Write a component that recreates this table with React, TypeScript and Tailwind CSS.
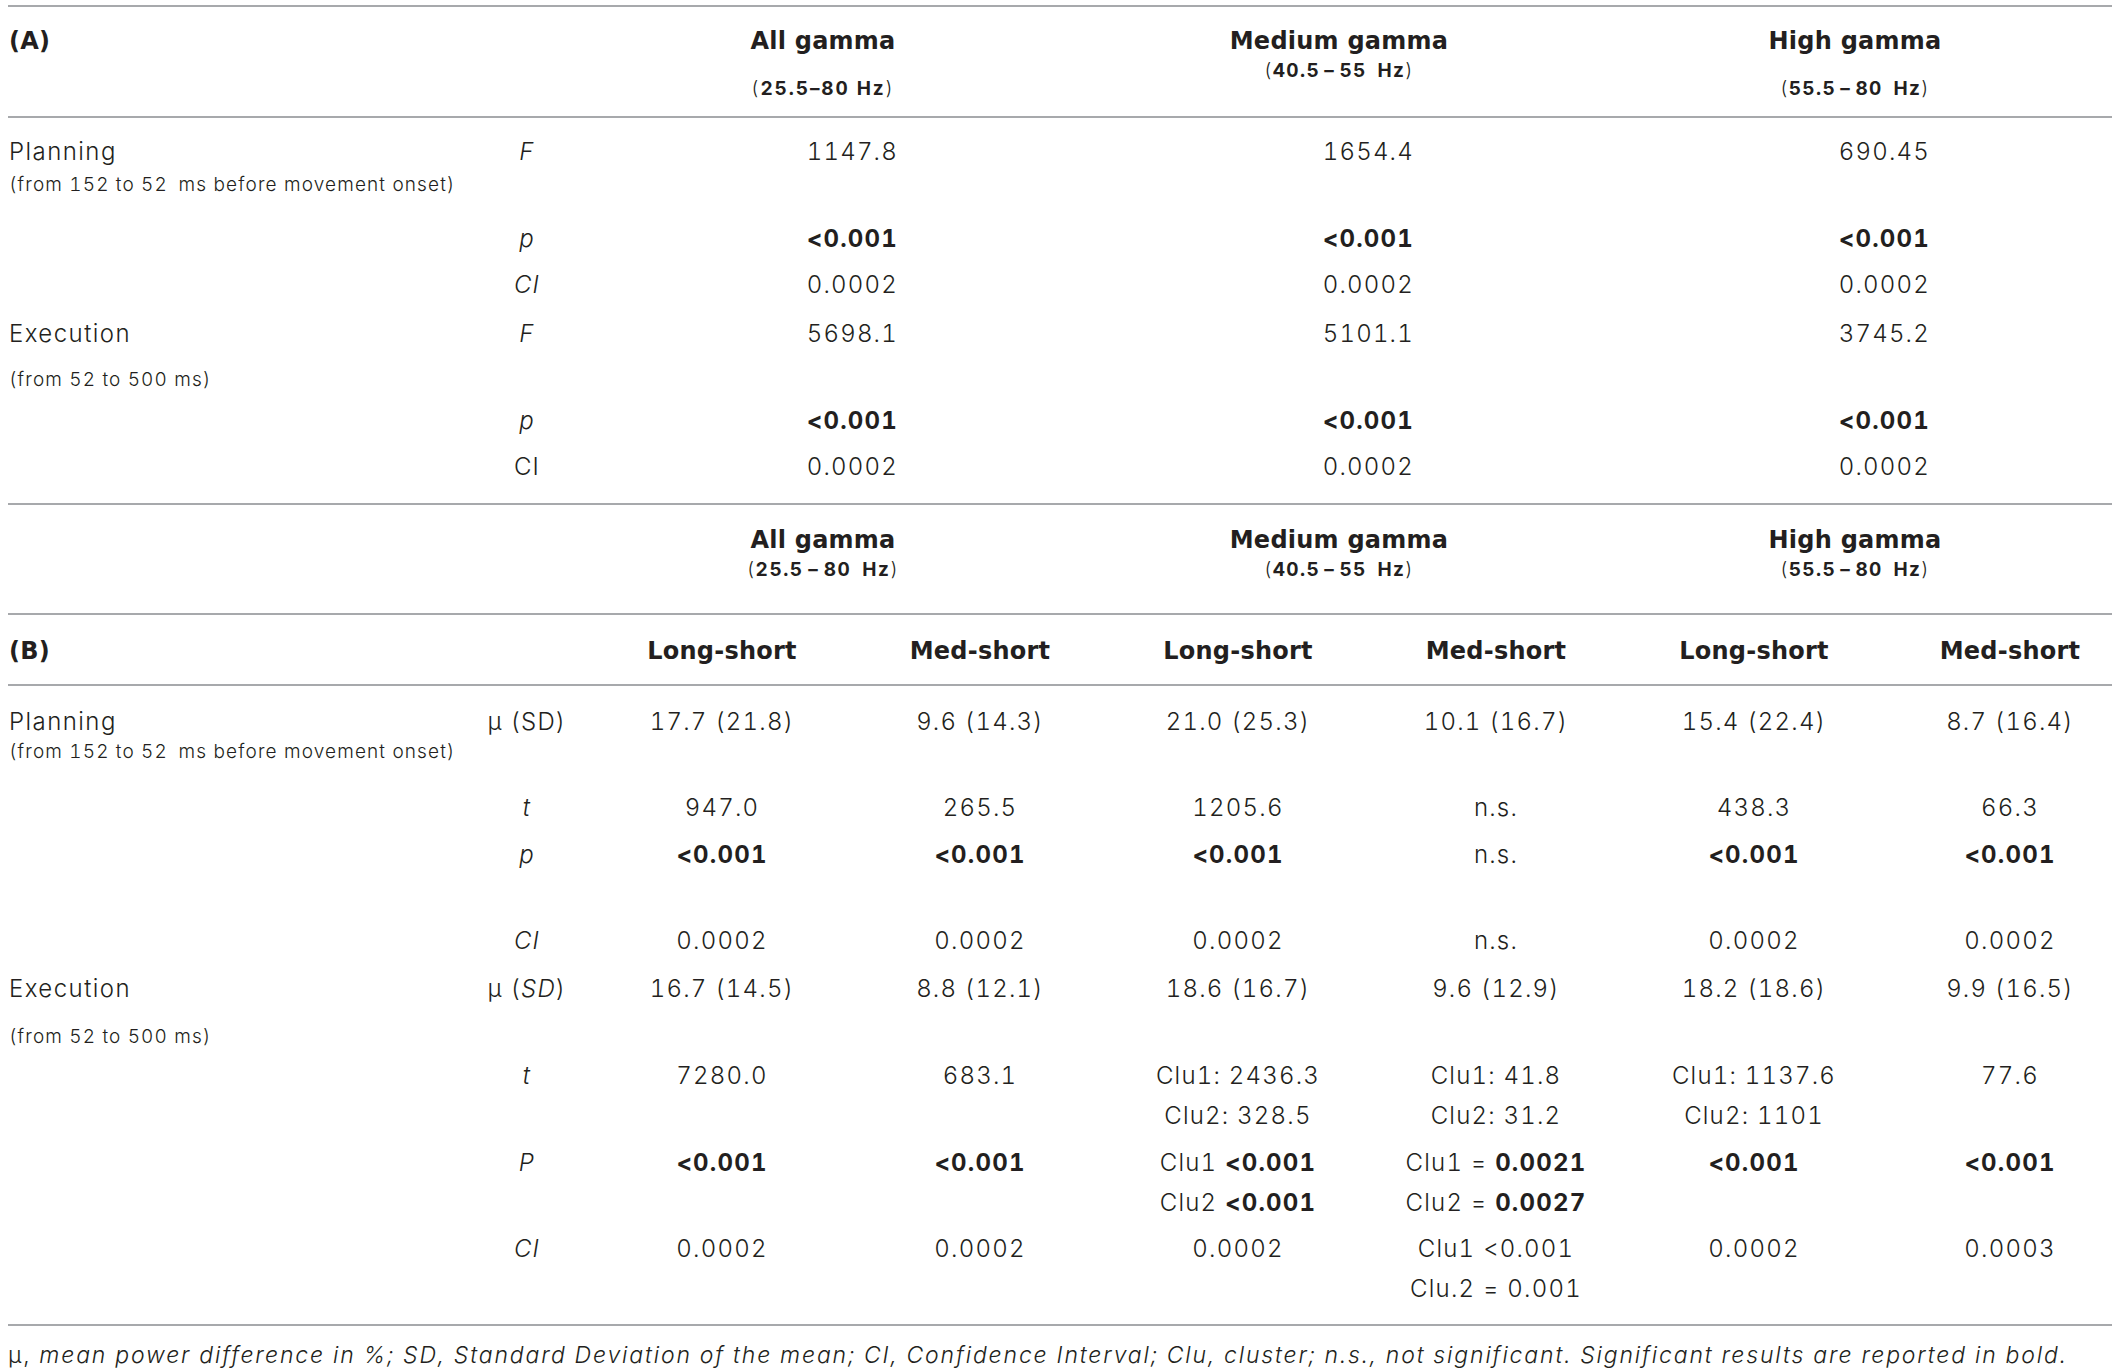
import type { ReactNode } from 'react'

const COLS = 'grid grid-cols-[453px_132px_258px_258px_258px_258px_258px_229px]'
const LINE = 'h-[2px] w-[2104px] bg-[#a7a9ac]'
// wide bold face for the column titles
const HEAD = "font-['DejaVu_Sans','Inter',sans-serif] font-bold tracking-[0.01em]"

const B = ({ children }: { children: ReactNode }) => <span className="font-bold">{children}</span>
const I = ({ children }: { children: ReactNode }) => <i>{children}</i>

type ARow = {
  cls: string
  label?: string
  sub?: string
  subCls?: string
  stat: ReactNode
  vals: ReactNode[]
}

const aRows: ARow[] = [
  {
    cls: 'h-[101px] pt-[14px]',
    label: 'Planning',
    sub: '(from 152 to 52\u2002ms before movement onset)',
    subCls: 'mt-[3px]',
    stat: <I>F</I>,
    vals: ['1147.8', '1654.4', '690.45'],
  },
  { cls: 'h-[46px]', stat: <I>p</I>, vals: [<B>&lt;0.001</B>, <B>&lt;0.001</B>, <B>&lt;0.001</B>] },
  { cls: 'h-[49px]', stat: <I>CI</I>, vals: ['0.0002', '0.0002', '0.0002'] },
  {
    cls: 'h-[87px]',
    label: 'Execution',
    sub: '(from 52 to 500 ms)',
    subCls: 'mt-[16px]',
    stat: <I>F</I>,
    vals: ['5698.1', '5101.1', '3745.2'],
  },
  { cls: 'h-[46px]', stat: <I>p</I>, vals: [<B>&lt;0.001</B>, <B>&lt;0.001</B>, <B>&lt;0.001</B>] },
  { cls: 'h-[56px]', stat: 'CI', vals: ['0.0002', '0.0002', '0.0002'] },
]

type BRow = {
  cls: string
  label?: string
  sub?: string
  subCls?: string
  stat: ReactNode
  vals: (ReactNode | ReactNode[])[]
}

const lt = <B>&lt;0.001</B>

const bRows: BRow[] = [
  {
    cls: 'h-[102px] pt-[16px]',
    label: 'Planning',
    sub: '(from 152 to 52\u2002ms before movement onset)',
    subCls: 'mt-0',
    stat: 'μ (SD)',
    vals: ['17.7 (21.8)', '9.6 (14.3)', '21.0 (25.3)', '10.1 (16.7)', '15.4 (22.4)', '8.7 (16.4)'],
  },
  { cls: 'h-[47px]', stat: <I>t</I>, vals: ['947.0', '265.5', '1205.6', 'n.s.', '438.3', '66.3'] },
  { cls: 'h-[86px]', stat: <I>p</I>, vals: [lt, lt, lt, 'n.s.', lt, lt] },
  { cls: 'h-[48px]', stat: <I>CI</I>, vals: ['0.0002', '0.0002', '0.0002', 'n.s.', '0.0002', '0.0002'] },
  {
    cls: 'h-[87px]',
    label: 'Execution',
    sub: '(from 52 to 500 ms)',
    subCls: 'mt-[18px]',
    stat: (
      <>
        μ (<I>SD</I>)
      </>
    ),
    vals: ['16.7 (14.5)', '8.8 (12.1)', '18.6 (16.7)', '9.6 (12.9)', '18.2 (18.6)', '9.9 (16.5)'],
  },
  {
    cls: 'h-[87px]',
    stat: <I>t</I>,
    vals: [
      '7280.0',
      '683.1',
      ['Clu1: 2436.3', 'Clu2: 328.5'],
      ['Clu1: 41.8', 'Clu2: 31.2'],
      ['Clu1: 1137.6', 'Clu2: 1101'],
      '77.6',
    ],
  },
  {
    cls: 'h-[86px]',
    stat: <I>P</I>,
    vals: [
      lt,
      lt,
      [<>Clu1 {lt}</>, <>Clu2 {lt}</>],
      [<>Clu1 = <B>0.0021</B></>, <>Clu2 = <B>0.0027</B></>],
      lt,
      lt,
    ],
  },
  {
    cls: 'h-[95px]',
    stat: <I>CI</I>,
    vals: ['0.0002', '0.0002', '0.0002', ['Clu1 <0.001', 'Clu.2 = 0.001'], '0.0002', '0.0003'],
  },
]

function Label({ label, sub, subCls }: { label?: string; sub?: string; subCls?: string }) {
  return (
    <div className="pl-[1px]">
      {label && <div className="leading-[40px] whitespace-nowrap tracking-[0.06em]">{label}</div>}
      {sub && <div className={`text-[19px] leading-[20px] whitespace-nowrap tracking-[0.06em] ${subCls}`}>{sub}</div>}
    </div>
  )
}

function GroupHeader({ title, range, rangeCls }: { title: string; range: string; rangeCls: string }) {
  return (
    <div className="col-span-2 w-[460px] text-center">
      <div className={`${HEAD} leading-[40px] whitespace-nowrap`}>{title}</div>
      <div className={`text-[19px] leading-[20px] whitespace-nowrap ${rangeCls}`}>
        (<span className="font-bold">{range}</span>)
      </div>
    </div>
  )
}

export default function App() {
  return (
    <div className="min-h-screen bg-white font-['Inter','Liberation_Sans',sans-serif] font-light text-[24px] tracking-[0.05em] text-[#231f20] tabular-nums">
      <div className="pl-[8px] pt-[5px]">
        <div className={LINE} />

        {/* (A) header */}
        <div className={`${COLS} h-[109px] pt-[14px]`}>
          <div className={`pl-[1px] leading-[40px] ${HEAD}`}>(A)</div>
          <div />
          <GroupHeader title="All gamma" range="25.5–80 Hz" rangeCls="mt-[18px] tracking-[0.1em]" />
          <GroupHeader title="Medium gamma" range={'40.5\u2009–\u200955\u2002Hz'} rangeCls="mt-0 tracking-[0.07em]" />
          <GroupHeader title="High gamma" range={'55.5\u2009–\u200980\u2002Hz'} rangeCls="mt-[18px] tracking-[0.07em]" />
        </div>
        <div className={LINE} />

        {aRows.map((r, i) => (
          <div key={i} className={`${COLS} ${r.cls}`}>
            <Label label={r.label} sub={r.sub} subCls={r.subCls} />
            <div className="text-center leading-[40px]">{r.stat}</div>
            {r.vals.map((v, j) => (
              <div key={j} className="col-span-2">
                <div className="w-[305px] text-right leading-[40px]">{v}</div>
              </div>
            ))}
          </div>
        ))}
        <div className={LINE} />

        {/* (B) header */}
        <div className={`${COLS} h-[108px] pt-[15px]`}>
          <div />
          <div />
          <GroupHeader title="All gamma" range={'25.5\u2009–\u200980\u2002Hz'} rangeCls="mt-0 tracking-[0.08em]" />
          <GroupHeader title="Medium gamma" range={'40.5\u2009–\u200955\u2002Hz'} rangeCls="mt-0 tracking-[0.07em]" />
          <GroupHeader title="High gamma" range={'55.5\u2009–\u200980\u2002Hz'} rangeCls="mt-0 tracking-[0.07em]" />
        </div>
        <div className={LINE} />

        <div className={`${COLS} h-[69px] pt-[16px] leading-[40px] ${HEAD}`}>
          <div className="pl-[1px]">(B)</div>
          <div />
          <div className="text-center">Long-short</div>
          <div className="text-center">Med-short</div>
          <div className="text-center">Long-short</div>
          <div className="text-center">Med-short</div>
          <div className="text-center">Long-short</div>
          <div className="pl-[25px] text-center">Med-short</div>
        </div>
        <div className={LINE} />

        {bRows.map((r, i) => (
          <div key={i} className={`${COLS} ${r.cls}`}>
            <Label label={r.label} sub={r.sub} subCls={r.subCls} />
            <div className="text-center leading-[40px] whitespace-nowrap">{r.stat}</div>
            {r.vals.map((v, j) => (
              <div key={j} className={`text-center leading-[40px] whitespace-nowrap ${j === 5 ? 'pl-[25px]' : ''}`}>
                {Array.isArray(v) ? v.map((line, k) => <div key={k}>{line}</div>) : v}
              </div>
            ))}
          </div>
        ))}
        <div className={LINE} />

        <p className="mt-[14px] text-[23px] leading-[30px] whitespace-nowrap tracking-[0.08em]">
          μ, <i>mean power difference in %; SD, Standard Deviation of the mean; CI, Confidence Interval; Clu, cluster; n.s., not significant. Significant results are reported in bold.</i>
        </p>
      </div>
    </div>
  )
}
